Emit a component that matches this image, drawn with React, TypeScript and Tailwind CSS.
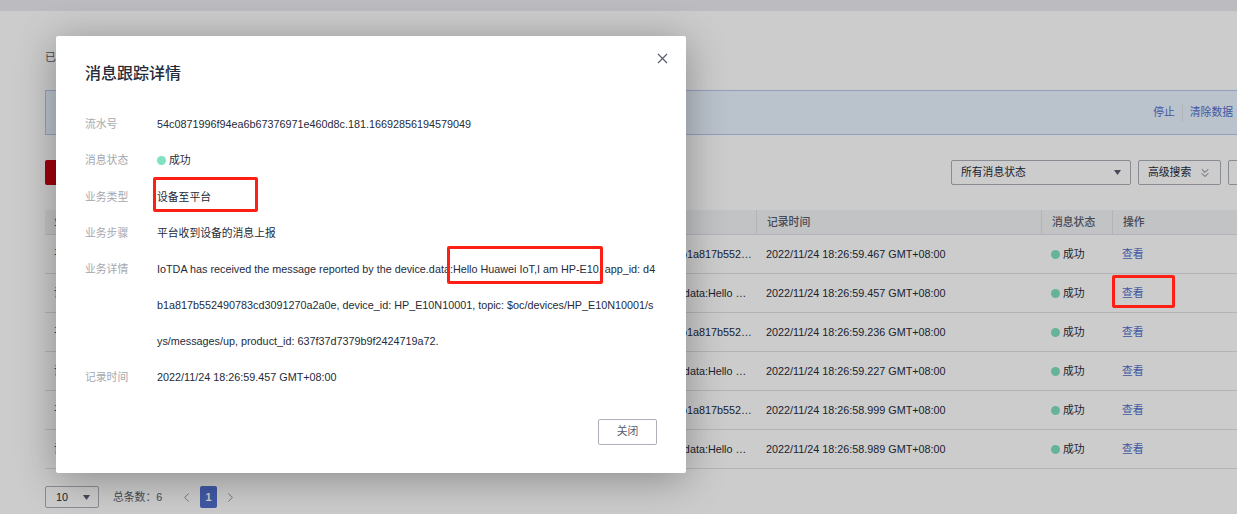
import { ChevronLeft, ChevronRight, ChevronsDown } from "lucide-react";

const font = "font-['Liberation_Sans','Noto_Sans_CJK_SC',sans-serif]";
const cols = "grid grid-cols-[357px_354px_285px_71px_125px]";

const forwarded = "Platform forwarded the rule engine message, app_id: d4b1a817b552490783cd3091270a2a0e";
const reported = "IoTDA has received the message reported by the device.data:Hello Huawei IoT,I am HP-E10";

const rows = [
  { step: "平台收到设备的消息上报", detail: forwarded, time: "2022/11/24 18:26:59.467 GMT+08:00" },
  { step: "设备上报消息到平台", detail: reported, time: "2022/11/24 18:26:59.457 GMT+08:00" },
  { step: "平台收到设备的消息上报", detail: forwarded, time: "2022/11/24 18:26:59.236 GMT+08:00" },
  { step: "设备上报消息到平台", detail: reported, time: "2022/11/24 18:26:59.227 GMT+08:00" },
  { step: "平台收到设备的消息上报", detail: forwarded, time: "2022/11/24 18:26:58.999 GMT+08:00" },
  { step: "设备上报消息到平台", detail: reported, time: "2022/11/24 18:26:58.989 GMT+08:00" },
];

function Caret() {
  return (
    <svg width="7" height="5" viewBox="0 0 7 5" className="shrink-0">
      <path d="M0 0h7L3.5 5z" fill="#575d6c" />
    </svg>
  );
}

function StatusDot() {
  return <span className="mr-[3px] inline-block size-[9px] shrink-0 rounded-full bg-[#7fe2c1]" />;
}

function Field({ label, children }: { label: string; children: React.ReactNode }) {
  return (
    <div className="flex leading-[36px]">
      <div className="w-[72px] shrink-0 text-[#a5a8b0]">{label}</div>
      <div className="w-[499px] break-all">{children}</div>
    </div>
  );
}

function Page() {
  return (
    <div className="h-[514px] w-[1237px] overflow-hidden bg-white text-[10.8px] text-[#252b3a]">
      <div className="h-[11px] bg-[#ebecf1]" />
      <div className="pl-[45px]">
        <p className="mt-[37px] h-[18px] leading-[18px] text-[#575d6c]">已开启消息跟踪</p>
        <div className="mt-[24px] flex h-[45px] items-center justify-end border border-r-0 border-[#b9c6f0] bg-[#e9f3fe] pr-[4px] text-[#526ecc]">
          <span>停止</span>
          <span className="mx-[7px] h-[18px] w-px bg-[#dfe1e6]" />
          <span>清除数据</span>
        </div>

        <div className="mt-[25px] flex h-[25px]">
          <div className="h-full w-[60px] shrink-0 rounded-[2px] bg-[#c7000b]" />
          <div className="ml-[846px] flex h-full w-[180px] shrink-0 items-center justify-between rounded-[2px] border border-[#adb0b8] px-[9px]">
            <span>所有消息状态</span>
            <Caret />
          </div>
          <div className="ml-[7px] flex h-full w-[83px] shrink-0 items-center justify-between rounded-[2px] border border-[#adb0b8] pl-[9px] pr-[8px]">
            <span className="whitespace-nowrap">高级搜索</span>
            <ChevronsDown size={14} strokeWidth={1.5} className="text-[#575d6c]" />
          </div>
          <div className="ml-[7px] h-full w-[60px] shrink-0 rounded-[2px] border border-[#adb0b8]" />
        </div>

        <div className={`${cols} mt-[25px] h-[25px] items-center border-b border-[#dfe1e6] bg-[#f3f4f7] font-medium text-[#575d6c]`}>
          <div className="pl-[9px]">业务步骤</div>
          <div className="pl-[10px]">业务详情</div>
          <div className="border-l border-[#dfe1e6] pl-[10px] leading-[24px]">记录时间</div>
          <div className="border-l border-[#dfe1e6] pl-[10px] leading-[24px]">消息状态</div>
          <div className="border-l border-[#dfe1e6] pl-[10px] leading-[24px]">操作</div>
        </div>
        {rows.map((row) => (
          <div key={row.time} className={`${cols} h-[39px] items-center border-b border-[#dfe1e6] pt-[1px]`}>
            <div className="pl-[9px]">{row.step}</div>
            <div className="truncate pl-[10px] pr-[4px]">{row.detail}</div>
            <div className="pl-[10px]">{row.time}</div>
            <div className="flex items-center pl-[10px]">
              <StatusDot />
              <span>成功</span>
            </div>
            <div className="pl-[10px] text-[#526ecc]">查看</div>
          </div>
        ))}

        <div className="mt-[17px] flex h-[22px] items-center">
          <div className="flex h-full w-[54px] shrink-0 items-center justify-between rounded-[2px] border border-[#adb0b8] pl-[10px] pr-[8px]">
            <span>10</span>
            <Caret />
          </div>
          <span className="ml-[14px] w-[50px] whitespace-nowrap text-[#575d6c]">总条数：6</span>
          <ChevronLeft size={15} strokeWidth={1.5} className="ml-[16px] text-[#8a8e99]" />
          <span className="ml-[6px] flex h-full w-[17px] items-center justify-center rounded-[2px] bg-[#526ecc] font-bold text-white">1</span>
          <ChevronRight size={15} strokeWidth={1.5} className="ml-[6px] text-[#8a8e99]" />
        </div>
      </div>
    </div>
  );
}

function Dialog() {
  return (
    <div className="ml-[56px] mt-[36px] h-[437px] w-[630px] rounded-[2px] bg-white pl-[29px] pt-[28px] text-[10.8px] text-[#252b3a] shadow-[0_6px_40px_rgba(0,0,0,0.32)]">
      <div className="flex items-start justify-between pr-[18px]">
        <h2 className="h-[20px] text-[16px] font-medium leading-[20px]">消息跟踪详情</h2>
        <svg width="11" height="11" viewBox="0 0 11 11" className="-mt-[11px]">
          <path d="M1 1l9 9M10 1l-9 9" stroke="#575d6c" strokeWidth="1.2" fill="none" />
        </svg>
      </div>
      <div className="mt-[22px]">
        <Field label="流水号">54c0871996f94ea6b67376971e460d8c.181.16692856194579049</Field>
        <Field label="消息状态">
          <span className="inline-flex items-center">
            <StatusDot />
            成功
          </span>
        </Field>
        <Field label="业务类型">设备至平台</Field>
        <Field label="业务步骤">平台收到设备的消息上报</Field>
        <Field label="业务详情">
          IoTDA has received the message reported by the device.data:Hello Huawei IoT,I am HP-E10, app_id: d4b1a817b552490783cd3091270a2a0e, device_id: HP_E10N10001, topic: $oc/devices/HP_E10N10001/sys/messages/up, product_id: 637f37d7379b9f2424719a72.
        </Field>
        <Field label="记录时间">2022/11/24 18:26:59.457 GMT+08:00</Field>
      </div>
      <div className="mt-[24px] flex justify-end pr-[29px]">
        <button className="h-[26px] w-[59px] rounded-[2px] border border-[#adb0b8] text-[#575d6c]">关闭</button>
      </div>
    </div>
  );
}

export default function App() {
  return (
    <div className={`relative h-[514px] w-[1237px] overflow-hidden ${font}`}>
      <Page />
      <div className="absolute inset-0 bg-black/20">
        <Dialog />
      </div>
      {/* annotation boxes drawn over the screenshot */}
      <div className="absolute left-[153px] top-[177px] h-[35px] w-[105px] rounded-[2px] border-[3px] border-[#ff1f14]" />
      <div className="absolute left-[447px] top-[246px] h-[38px] w-[156px] rounded-[2px] border-[3px] border-[#ff1f14]" />
      <div className="absolute left-[1112px] top-[275px] h-[33px] w-[63px] rounded-[2px] border-[3px] border-[#ff1f14]" />
    </div>
  );
}
